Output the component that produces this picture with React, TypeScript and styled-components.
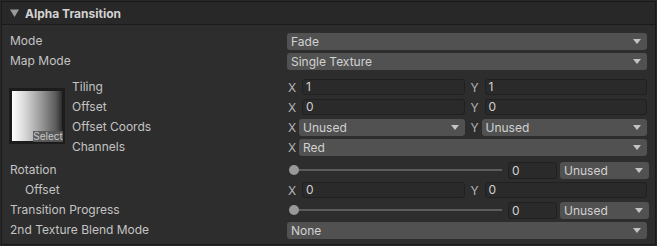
import React from "react";
import styled, { createGlobalStyle } from "styled-components";

const GlobalStyle = createGlobalStyle`
  html, body {
    margin: 0;
    padding: 0;
    background: #282828;
  }
  body {
    font-family: Inter, "Noto Sans", "Liberation Sans", sans-serif;
    font-size: 12px;
    color: #c4c4c4;
  }
`;

const Arrow = () => (
  <svg width="8" height="5" viewBox="0 0 8 5">
    <path d="M0 0 H8 L4 5 Z" fill="#c4c4c4" />
  </svg>
);

interface DropdownProps {
  value: string;
  width?: number;
}
const Dropdown: React.FC<DropdownProps> = ({ value, width }) => (
  <Select_Box $width={width}>
    <span>{value}</span>
    <Arrow />
  </Select_Box>
);

interface VectorProps {
  x: string;
  y: string;
}
const VectorField: React.FC<VectorProps> = ({ x, y }) => (
  <Vector_Row>
    <Axis_Cell>
      <Axis>X</Axis>
      <Text_Field>{x}</Text_Field>
    </Axis_Cell>
    <Axis_Cell>
      <Axis>Y</Axis>
      <Text_Field>{y}</Text_Field>
    </Axis_Cell>
  </Vector_Row>
);

const SliderField: React.FC<{ value: string }> = ({ value }) => (
  <Slider_Row>
    <Track>
      <Knob />
    </Track>
    <Number_Field>{value}</Number_Field>
    <Dropdown value="Unused" width={89} />
  </Slider_Row>
);

const App: React.FC = () => {
  return (
    <>
      <GlobalStyle />
      <Panel>
        <Header>
          <svg width="9" height="8" viewBox="0 0 9 8">
            <path d="M0 0.5 H9 L4.5 8 Z" fill="#9a9a9a" />
          </svg>
          <Header_Title>Alpha Transition</Header_Title>
        </Header>
        <Body>
          <Row>
            <Label>Mode</Label>
            <Dropdown value="Fade" />
          </Row>
          <Row>
            <Label>Map Mode</Label>
            <Dropdown value="Single Texture" />
          </Row>

          <Texture_Section>
            <Texture_Slot>
              <Texture_Preview />
              <Select_Tag>Select</Select_Tag>
            </Texture_Slot>
            <Sub_Label>Tiling</Sub_Label>
            <VectorField x="1" y="1" />
            <Sub_Label>Offset</Sub_Label>
            <VectorField x="0" y="0" />
            <Sub_Label>Offset Coords</Sub_Label>
            <Vector_Row>
              <Axis_Cell>
                <Axis $narrow>X</Axis>
                <Dropdown value="Unused" />
              </Axis_Cell>
              <Axis_Cell>
                <Axis $narrow>Y</Axis>
                <Dropdown value="Unused" />
              </Axis_Cell>
            </Vector_Row>
            <Sub_Label>Channels</Sub_Label>
            <Axis_Cell>
              <Axis $narrow>X</Axis>
              <Dropdown value="Red" />
            </Axis_Cell>
          </Texture_Section>

          <Lower_Section>
            <Row>
              <Label>Rotation</Label>
              <SliderField value="0" />
            </Row>
            <Row>
              <Label $indent>Offset</Label>
              <VectorField x="0" y="0" />
            </Row>
            <Row>
              <Label>Transition Progress</Label>
              <SliderField value="0" />
            </Row>
            <Row>
              <Label>2nd Texture Blend Mode</Label>
              <Dropdown value="None" />
            </Row>
          </Lower_Section>
        </Body>
      </Panel>
    </>
  );
};

const Panel = styled.div`
  margin: 1px;
  width: 653px;
  height: 242px;
  border: 1px solid #1a1a1a;
  background-color: #2d2d2d;
  display: flex;
  flex-direction: column;
`;

const Header = styled.div`
  height: 22px;
  display: flex;
  align-items: center;
  gap: 6px;
  padding-left: 8px;
  background-color: #282828;
  border-bottom: 1px solid #1a1a1a;
`;

const Header_Title = styled.span`
  font-weight: 700;
  color: #d2d2d2;
`;

const Body = styled.div`
  padding: 7px 8px 0 8px;
  display: flex;
  flex-direction: column;
  gap: 2px;
`;

const Row = styled.div`
  display: grid;
  grid-template-columns: 277px 1fr;
  height: 18px;
  align-items: center;
`;

const Label = styled.div<{ $indent?: boolean }>`
  padding-left: ${(p) => (p.$indent ? "15px" : "0")};
  white-space: nowrap;
  line-height: 18px;
`;

const Sub_Label = styled.div`
  line-height: 18px;
  white-space: nowrap;
`;

const Texture_Section = styled.div`
  margin-top: 6px;
  display: grid;
  grid-template-columns: 62px 215px 1fr;
  grid-auto-rows: 18px;
  row-gap: 2px;
  align-items: center;
`;

const Lower_Section = styled.div`
  margin-top: 3px;
  display: flex;
  flex-direction: column;
  gap: 2px;
`;

const Texture_Slot = styled.div`
  grid-row: 1 / span 4;
  position: relative;
  width: 56px;
  height: 56px;
  margin-left: -1px;
  margin-top: -2px;
  box-sizing: border-box;
  padding: 3px;
  background-color: #1c1c1c;
`;

const Texture_Preview = styled.div`
  width: 100%;
  height: 100%;
  background: linear-gradient(
    90deg,
    #ffffff 0%,
    #d8d8d8 25%,
    #a0a0a0 55%,
    #5a5a5a 88%,
    #2c2c2c 100%
  );
`;

const Select_Tag = styled.div`
  position: absolute;
  right: 2px;
  bottom: 2px;
  width: 30px;
  height: 11px;
  background-color: rgba(88, 88, 88, 0.92);
  color: #c8c8c8;
  font-size: 10px;
  line-height: 11px;
  text-align: center;
`;

const Select_Box = styled.div<{ $width?: number }>`
  flex: ${(p) => (p.$width ? "none" : "1")};
  width: ${(p) => (p.$width ? `${p.$width}px` : "auto")};
  height: 17px;
  box-sizing: border-box;
  display: flex;
  align-items: center;
  justify-content: space-between;
  padding: 0 6px 0 4px;
  background-color: #515151;
  border-radius: 3px;
  color: #d2d2d2;
  white-space: nowrap;
  overflow: hidden;
`;

const Vector_Row = styled.div`
  display: grid;
  grid-template-columns: 1fr 1fr;
  column-gap: 5px;
  align-items: center;
`;

const Axis_Cell = styled.div`
  display: flex;
  align-items: center;
  min-width: 0;
`;

const Axis = styled.span<{ $narrow?: boolean }>`
  width: ${(p) => (p.$narrow ? "12px" : "15px")};
  flex: none;
  padding-left: 1px;
  box-sizing: border-box;
  color: #b4b4b4;
`;

const Text_Field = styled.div`
  flex: 1;
  height: 16px;
  box-sizing: border-box;
  padding-left: 3px;
  line-height: 14px;
  background-color: #2a2a2a;
  border: 1px solid #202020;
  border-radius: 3px;
  color: #d2d2d2;
`;

const Slider_Row = styled.div`
  display: flex;
  align-items: center;
  margin-right: -2px;
`;

const Track = styled.div`
  position: relative;
  flex: 1;
  height: 2px;
  margin-left: 3px;
  margin-right: 6px;
  background-color: #5c5c5c;
`;

const Knob = styled.div`
  position: absolute;
  left: -1px;
  top: -4px;
  width: 10px;
  height: 10px;
  border-radius: 50%;
  background-color: #999999;
`;

const Number_Field = styled(Text_Field)`
  flex: none;
  width: 49px;
  height: 17px;
  line-height: 15px;
  margin-right: 3px;
`;

export default App;
